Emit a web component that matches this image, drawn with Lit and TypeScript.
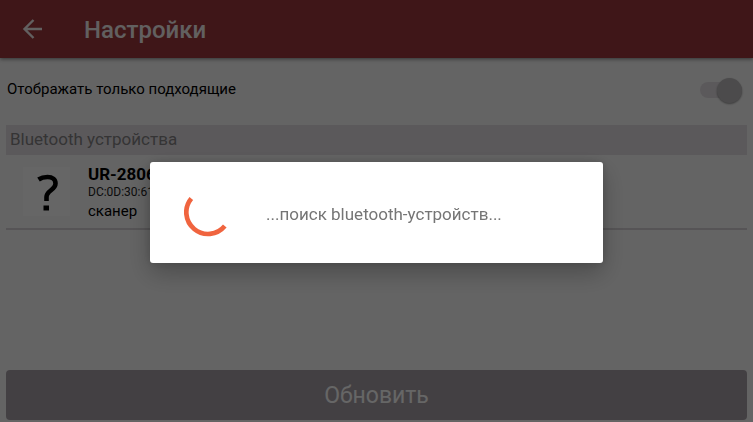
import { LitElement, html, css } from "lit";
import { customElement, state } from "lit/decorators.js";

interface Device {
  name: string;
  address: string;
  kind: string;
}

@customElement("app-root")
export class AppRoot extends LitElement {
  static styles = css`
    :host {
      display: flex;
      flex-direction: column;
      min-height: 100vh;
      box-sizing: border-box;
      background: #fafafa;
      color: #000;
      font-family: Roboto, "Noto Sans", sans-serif;
    }
    .bar {
      display: flex;
      align-items: center;
      gap: 36px;
      height: 58px;
      padding: 0 16px;
      background: #9d373c;
      color: #f4f0f0;
      box-shadow: 0 1px 4px rgba(0, 0, 0, 0.5);
    }
    .back {
      display: flex;
      padding: 0;
      border: 0;
      background: none;
      color: inherit;
    }
    .title {
      margin: 0;
      font-size: 24px;
      line-height: 34px;
      padding-top: 2px;
      font-weight: 500;
    }
    .content {
      flex: 1;
      display: flex;
      flex-direction: column;
      padding: 0 6px 2px;
    }
    .option {
      display: flex;
      align-items: center;
      justify-content: space-between;
      height: 67px;
      padding: 0 5px 0 1px;
      font-size: 15px;
      line-height: 20px;
    }
    .option-label {
      padding-bottom: 6px;
    }
    .switch {
      appearance: none;
      display: flex;
      align-items: center;
      justify-content: flex-end;
      width: 42px;
      height: 16px;
      margin: 0 0 3px;
      border-radius: 8px;
      background: #e4dfe4;
    }
    .switch::before {
      content: "";
      width: 25px;
      height: 25px;
      border-radius: 50%;
      background: #bebcbe;
      box-shadow: 0 1px 2px rgba(0, 0, 0, 0.4);
    }
    .switch:not(:checked) {
      justify-content: flex-start;
    }
    .section {
      margin: 0;
      padding: 0 4px 2px;
      background: #e4dfe4;
      color: #858385;
      font-size: 17px;
      line-height: 28px;
      font-weight: 400;
    }
    .devices {
      margin: 0;
      padding: 0;
      list-style: none;
    }
    .device {
      display: flex;
      align-items: center;
      gap: 18px;
      height: 73px;
      padding-left: 17px;
      border-bottom: 2px solid #d6d2d6;
    }
    .thumb {
      width: 47px;
      height: 49px;
      background: #fff;
    }
    .info {
      display: flex;
      flex-direction: column;
      padding-top: 2px;
    }
    .name {
      font-size: 17px;
      line-height: 20px;
      font-weight: 700;
    }
    .address {
      font-size: 12px;
      line-height: 17px;
      color: #222;
    }
    .kind {
      font-size: 15px;
      line-height: 20px;
    }
    .refresh {
      height: 50px;
      margin-top: auto;
      border: 0;
      padding-top: 2px;
      border-radius: 4px;
      background: #a8a0a8;
      color: #fff;
      font: 400 23px/32px Roboto, "Noto Sans", sans-serif;
    }
    .scrim {
      position: fixed;
      inset: 0;
      display: flex;
      align-items: center;
      justify-content: center;
      padding-top: 3px;
      background: rgba(0, 0, 0, 0.6);
    }
    .popup {
      display: flex;
      align-items: center;
      gap: 34px;
      box-sizing: border-box;
      width: calc(100% - 300px);
      height: 101px;
      padding: 0 34px;
      border-radius: 3px;
      background: #fff;
      color: #757575;
      box-shadow: 0 10px 24px rgba(0, 0, 0, 0.25), 0 0 8px rgba(0, 0, 0, 0.15);
      font-size: 17px;
      line-height: 24px;
    }
    .status {
      padding-top: 2px;
    }
    .spinner {
      flex: none;
    }
  `;

  @state() private onlySuitable = true;
  @state() private searching = true;

  private devices: Device[] = [
    { name: "UR-2806", address: "DC:0D:30:61", kind: "сканер" },
  ];

  private toggle(e: Event) {
    this.onlySuitable = (e.target as HTMLInputElement).checked;
  }

  render() {
    return html`
      <header class="bar">
        <button class="back" aria-label="Назад">
          <svg width="32" height="32" viewBox="0 0 32 32" fill="none" stroke="currentColor" stroke-width="2.400">
            <path d="M26 16H9M17.500 7L8.500 16L17.500 25" />
          </svg>
        </button>
        <h1 class="title">Настройки</h1>
      </header>
      <main class="content">
        <div class="option">
          <label class="option-label" for="only">Отображать только подходящие</label>
          <input class="switch" id="only" type="checkbox" role="switch"
            .checked=${this.onlySuitable} @change=${this.toggle} />
        </div>
        <h2 class="section">Bluetooth устройства</h2>
        <ul class="devices">
          ${this.devices.map(
            (d) => html`
              <li class="device">
                <svg class="thumb" viewBox="0 0 47 49" fill="none" aria-hidden="true">
                  <path d="M15.500 12.500C18.500 10.500 21.500 10 24.500 10C29.500 10 32.500 12.500 32.500 16.500C32.500 23 23.500 23.500 23.500 30V34" stroke="#000" stroke-width="4.600" />
                  <rect x="20.500" y="38.500" width="5.500" height="5" fill="#000" />
                </svg>
                <div class="info">
                  <span class="name">${d.name}</span>
                  <span class="address">${d.address}</span>
                  <span class="kind">${d.kind}</span>
                </div>
              </li>
            `
          )}
        </ul>
        <button class="refresh" @click=${() => (this.searching = true)}>Обновить</button>
      </main>
      ${this.searching
        ? html`
            <div class="scrim">
              <div class="popup" role="dialog" aria-modal="true" aria-labelledby="status">
                <svg class="spinner" width="48" height="48" viewBox="0 0 48 48" fill="none" aria-hidden="true">
                  <path d="M7.300 9.400A21.700 21.700 0 1 0 40.800 37.100" stroke="#f0643f" stroke-width="4.700" />
                </svg>
                <span class="status" id="status">...поиск bluetooth-устройств...</span>
              </div>
            </div>
          `
        : null}
    `;
  }
}
